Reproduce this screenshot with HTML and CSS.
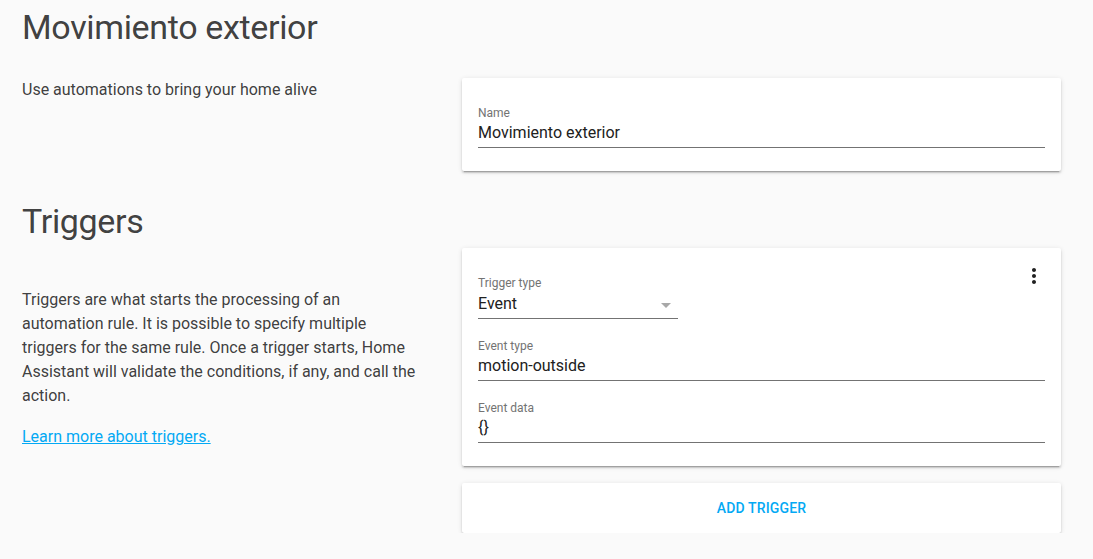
FILE: index.html
```html
<!DOCTYPE html>
<html>
<head>
<meta charset="utf-8">
<link rel="stylesheet" href="styles.css">
</head>
<body>
<div class="page">
  <section class="section section-name">
    <h1 class="header">Movimiento exterior</h1>
    <div class="together">
      <div class="intro">Use automations to bring your home alive</div>
      <div class="panel">
        <div class="card">
          <div class="field">
            <div class="label">Name</div>
            <div class="input">Movimiento exterior</div>
          </div>
        </div>
      </div>
    </div>
  </section>

  <section class="section section-triggers">
    <h1 class="header">Triggers</h1>
    <div class="together">
      <div class="intro">
        <p class="intro-text">Triggers are what starts the processing of an automation rule. It is possible to specify multiple triggers for the same rule. Once a trigger starts, Home Assistant will validate the conditions, if any, and call the action.</p>
        <a class="learn-link" href="#">Learn more about triggers.</a>
      </div>
      <div class="panel">
        <div class="card card-trigger">
          <button class="menu-btn" aria-label="menu">
            <svg viewBox="0 0 24 24" width="24" height="24"><path fill="currentColor" d="M12 8c1.1 0 2-.9 2-2s-.9-2-2-2-2 .9-2 2 .9 2 2 2zm0 2c-1.1 0-2 .9-2 2s.9 2 2 2 2-.9 2-2-.9-2-2-2zm0 6c-1.1 0-2 .9-2 2s.9 2 2 2 2-.9 2-2-.9-2-2-2z"/></svg>
          </button>
          <div class="field field-dropdown">
            <div class="label">Trigger type</div>
            <div class="input input-dropdown">
              <span>Event</span>
              <svg class="drop-arrow" viewBox="0 0 24 24" width="24" height="24"><path fill="currentColor" d="M7 10l5 5 5-5z"/></svg>
            </div>
          </div>
          <div class="field">
            <div class="label">Event type</div>
            <div class="input">motion-outside</div>
          </div>
          <div class="field">
            <div class="label">Event data</div>
            <div class="input">{}</div>
          </div>
        </div>
        <div class="card card-add">
          <span class="add-btn">ADD TRIGGER</span>
        </div>
      </div>
    </div>
  </section>
</div>
</body>
</html>
```

FILE: styles.css
```css
html, body {
  margin: 0;
  padding: 0;
  background: #fafafa;
}

body {
  font-family: Roboto, "Liberation Sans", sans-serif;
  color: #212121;
}

.page {
  padding: 0 32px 0 22px;
}

.header {
  margin: 0;
  font-size: 34px;
  font-weight: 400;
  line-height: 40px;
  letter-spacing: -0.01em;
  color: rgba(33, 33, 33, 0.87);
}

.section-name .header {
  margin-top: 7px;
}

.section-triggers .header {
  margin-top: 30px;
}

.together {
  display: flex;
  align-items: flex-start;
}

.section-name .together {
  margin-top: 31px;
}

.section-triggers .together {
  margin-top: 7px;
}

.intro {
  width: 400px;
  flex: none;
  margin-right: 40px;
  font-size: 16px;
  line-height: 24px;
  color: rgba(33, 33, 33, 0.87);
}

.intro-text {
  margin: 40px 0 17px;
}

.learn-link {
  color: #03a9f4;
  text-decoration: underline;
}

.panel {
  flex: 1;
  min-width: 0;
}

.card {
  position: relative;
  background: #fff;
  border-radius: 2px;
  box-shadow: 0 2px 2px 0 rgba(0, 0, 0, .14), 0 1px 5px 0 rgba(0, 0, 0, .12), 0 3px 1px -2px rgba(0, 0, 0, .2);
  padding: 16px 16px 15px;
}

.field {
  padding: 11px 0 8px;
}

.label {
  font-size: 12px;
  line-height: 16px;
  color: #737373;
}

.input {
  font-size: 16px;
  line-height: 24px;
  color: #212121;
  padding-bottom: 2px;
  border-bottom: 1px solid #737373;
}

.field-dropdown {
  width: 200px;
}

.input-dropdown {
  display: flex;
  align-items: center;
  justify-content: space-between;
  padding-bottom: 1px;
}

.drop-arrow {
  color: #a8a8a8;
  margin-top: 2px;
  display: block;
}

.menu-btn {
  position: absolute;
  top: 16px;
  right: 15px;
  width: 24px;
  height: 24px;
  padding: 0;
  border: 0;
  background: none;
  color: #212121;
}

.menu-btn svg {
  display: block;
}

.card-add {
  margin-top: 17px;
  height: 50px;
  padding: 0;
  display: flex;
  align-items: center;
  justify-content: center;
}

.add-btn {
  font-size: 14px;
  font-weight: 500;
  color: #03a9f4;
  letter-spacing: 0.01em;
}
```
